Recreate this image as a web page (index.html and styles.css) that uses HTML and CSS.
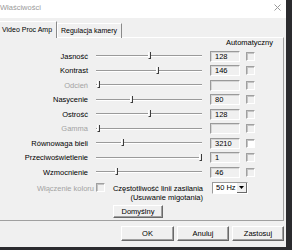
FILE: index.html
```html
<!DOCTYPE html>
<html lang="pl">
<head>
  <meta charset="UTF-8">
  <title>Właściwości</title>
  <link rel="stylesheet" href="styles.css">
</head>
<body>

  <div class="dialog">
    <div class="titlebar">
      <span class="title">Właściwości</span>
      <svg class="close" width="7" height="7" viewBox="0 0 7 7">
        <path d="M0.5 0.5 L6.5 6.5 M6.5 0.5 L0.5 6.5" stroke="#9a9a9a" stroke-width="1" fill="none"/>
      </svg>
    </div>

    <div class="tabs">
      <div class="tab active">Video Proc Amp</div>
      <div class="tab">Regulacja kamery</div>
    </div>

    <div class="panel">
      <div class="auto-head">Automatyczny</div>

      <div class="rows">
        <div class="row">
          <span class="label">Jasność</span>
          <div class="slider"><div class="track"></div><div class="thumb" style="left: 52px"></div></div>
          <div class="field">128</div>
          <div class="check"></div>
        </div>
        <div class="row">
          <span class="label">Kontrast</span>
          <div class="slider"><div class="track"></div><div class="thumb" style="left: 60px"></div></div>
          <div class="field">146</div>
          <div class="check"></div>
        </div>
        <div class="row">
          <span class="label disabled">Odcień</span>
          <div class="slider"><div class="track"></div><div class="thumb" style="left: 1px"></div></div>
          <div class="field"></div>
          <div class="check"></div>
        </div>
        <div class="row">
          <span class="label">Nasycenie</span>
          <div class="slider"><div class="track"></div><div class="thumb" style="left: 34px"></div></div>
          <div class="field">80</div>
          <div class="check"></div>
        </div>
        <div class="row">
          <span class="label">Ostrość</span>
          <div class="slider"><div class="track"></div><div class="thumb" style="left: 52px"></div></div>
          <div class="field">128</div>
          <div class="check"></div>
        </div>
        <div class="row">
          <span class="label disabled">Gamma</span>
          <div class="slider"><div class="track"></div><div class="thumb" style="left: 1px"></div></div>
          <div class="field"></div>
          <div class="check"></div>
        </div>
        <div class="row">
          <span class="label">Równowaga bieli</span>
          <div class="slider"><div class="track"></div><div class="thumb" style="left: 25px"></div></div>
          <div class="field">3210</div>
          <div class="check on"></div>
        </div>
        <div class="row">
          <span class="label">Przeciwoświetlenie</span>
          <div class="slider"><div class="track"></div><div class="thumb" style="left: 103px"></div></div>
          <div class="field">1</div>
          <div class="check"></div>
        </div>
        <div class="row">
          <span class="label">Wzmocnienie</span>
          <div class="slider"><div class="track"></div><div class="thumb" style="left: 19px"></div></div>
          <div class="field">46</div>
          <div class="check"></div>
        </div>
      </div>

      <div class="extra">
        <span class="color-label disabled">Włączenie koloru</span>
        <div class="check color-check"></div>
        <div class="freq-label">Częstotliwość linii zasilania<br>(Usuwanie migotania)</div>
        <div class="combo">
          <span class="combo-value">50 Hz</span>
          <span class="combo-btn">
            <svg width="5" height="3" viewBox="0 0 5 3"><path d="M0 0 H5 L2.5 3 Z" fill="#000"/></svg>
          </span>
        </div>
      </div>

      <div class="defaults">
        <button class="btn btn-default">Domyślny</button>
      </div>
    </div>

    <div class="buttons">
      <button class="btn ok">OK</button>
      <button class="btn">Anuluj</button>
      <button class="btn">Zastosuj</button>
    </div>
  </div>

</body>
</html>
```

FILE: styles.css
```css
* {
  margin: 0;
  padding: 0;
  box-sizing: border-box;
}

body {
  font-family: 'Liberation Sans', Arial, sans-serif;
  font-size: 7.5px;
  color: #000;
  background-color: #2b2b2e;
  width: 292px;
  height: 250px;
  overflow: hidden;
}

.dialog {
  width: 286px;
  height: 247px;
  background-color: #f0f0f0;
  overflow: hidden;
}

.titlebar {
  height: 18px;
  background-color: #fff;
  display: flex;
  align-items: center;
  justify-content: space-between;
  padding-right: 5px;
}

.title {
  color: #9a9a9a;
  line-height: 10px;
  margin-top: -2px;
}

.close {
  display: block;
  margin-top: -3px;
}

/* zakładki */
.tabs {
  height: 20px;
  display: flex;
  align-items: flex-end;
  margin-left: -2px;
  font-size: 7px;
}

.tab {
  height: 15px;
  line-height: 13px;
  padding: 0 3px 0 4px;
  border-top: 1px solid #fff;
  border-left: 1px solid #fff;
  border-right: 1px solid #8a8a8a;
  white-space: nowrap;
}

.tab.active {
  height: 17px;
  line-height: 16px;
  width: 59px;
  padding: 0 0 0 3px;
  position: relative;
  z-index: 1;
  background-color: #f0f0f0;
}

.tab + .tab {
  width: 65px;
  padding-left: 3px;
}

.panel {
  margin-left: -2px;
  width: 286px;
  height: 184px;
  border-top: 1px solid #fff;
  border-left: 1px solid #fff;
  border-right: 1px solid #a0a0a0;
  border-bottom: 1px solid #a0a0a0;
  margin-top: -1px;
}

.auto-head {
  height: 11px;
  line-height: 10px;
  text-align: right;
  padding-right: 10px;
}

.rows {
  display: flex;
  flex-direction: column;
}

.row {
  height: 14.5px;
  display: flex;
  align-items: center;
}

.label {
  width: 90px;
  padding-right: 1px;
  text-align: right;
  white-space: nowrap;
}

.disabled {
  color: #a3a3a3;
}

.slider {
  position: relative;
  width: 106px;
  height: 8px;
  margin-left: 7px;
}

.track {
  position: absolute;
  left: 0;
  right: 0;
  top: 3px;
  height: 2px;
  border-top: 1px solid #9a9a9a;
  border-bottom: 1px solid #fff;
}

.thumb {
  position: absolute;
  top: 0;
  width: 3px;
  height: 7px;
  border-left: 1px solid #fff;
  border-right: 1px solid #3c3c3c;
  border-bottom: 1px solid #3c3c3c;
  background-color: #f0f0f0;
}

.field {
  width: 30px;
  height: 11px;
  margin-left: 8px;
  padding-left: 4px;
  line-height: 9px;
  border: 1px solid;
  border-color: #9a9a9a #fff #fff #9a9a9a;
  box-shadow: inset 1px 1px 0 #d6d6d6;
}

.check {
  width: 9px;
  height: 9px;
  margin-left: 6px;
  border: 1px solid;
  border-color: #a0a0a0 #fff #fff #a0a0a0;
  box-shadow: inset 1px 1px 0 #c4c4c4;
}

.check.on {
  background-color: #fff;
}

/* dolna sekcja */
.extra {
  display: flex;
  align-items: flex-start;
  margin-top: 1px;
  height: 21px;
}

.color-label {
  width: 95px;
  text-align: right;
  margin-top: 3px;
  line-height: 9px;
  white-space: nowrap;
}

.color-check {
  margin-left: 2px;
  margin-top: 2px;
}

.freq-label {
  width: 98px;
  text-align: right;
  line-height: 9px;
  margin-top: 3px;
  white-space: nowrap;
}

.combo {
  display: flex;
  align-items: center;
  width: 36px;
  height: 12px;
  margin-left: 9px;
  margin-top: 1px;
  background-color: #fff;
  border: 1px solid;
  border-color: #9a9a9a #fff #fff #9a9a9a;
}

.combo-value {
  flex: 1;
  padding-left: 3px;
}

.combo-btn {
  width: 10px;
  height: 10px;
  display: flex;
  align-items: center;
  justify-content: center;
  background-color: #f0f0f0;
  border-right: 1px solid #696969;
  border-bottom: 1px solid #696969;
}

.combo-btn svg {
  display: block;
}

.defaults {
  padding-left: 114px;
  margin-top: 3px;
}

.btn {
  font-family: inherit;
  font-size: 7.5px;
  color: #000;
  height: 14px;
  background-color: #f0f0f0;
  border: 1px solid;
  border-color: #fff #696969 #696969 #fff;
  box-shadow: inset -1px -1px 0 #a0a0a0;
}

.btn-default {
  width: 50px;
  height: 13px;
}

.buttons {
  display: flex;
  gap: 3px;
  padding-left: 121px;
  margin-top: 5px;
}

.buttons .btn {
  width: 52px;
  height: 15px;
}

.buttons .ok {
  width: 53px;
}
```
